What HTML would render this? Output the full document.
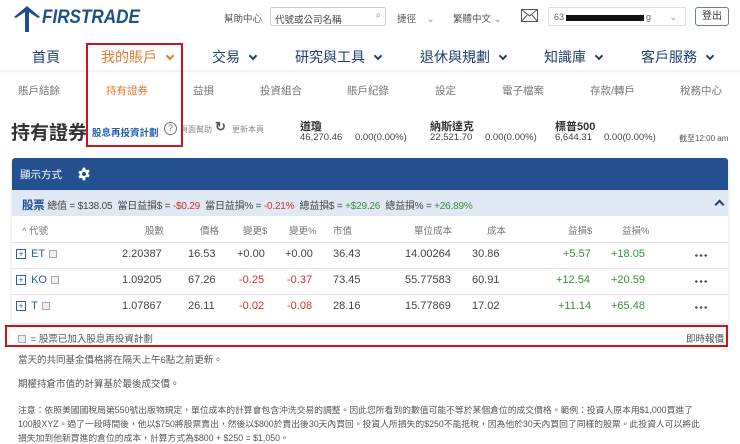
<!DOCTYPE html>
<html><head><meta charset="utf-8"><style>
*{margin:0;padding:0;box-sizing:border-box}
body{width:740px;height:442px;overflow:hidden;background:#fff;font-family:"Liberation Sans","Noto Sans CJK TC",sans-serif;color:#333;position:relative}
.a{position:absolute;white-space:nowrap}
.nav{font-size:14px;color:#1f3f6e;top:47px}
.sub{font-size:10.5px;color:#777;top:83px}
.th{font-size:9.5px;color:#777;top:223px}
.td{font-size:11px;color:#444}
.r{color:#d0312d}.g{color:#3a8d3a}
.chev{display:inline-block;width:6px;height:6px;border-right:2px solid #1f3f6e;border-bottom:2px solid #1f3f6e;transform:rotate(45deg);margin-left:10px;position:relative;top:-3px}
.plus{display:inline-block;width:10px;height:10px;border:1px solid #2f5f9f;font-size:9px;line-height:8px;text-align:center;color:#2f5f9f;vertical-align:middle}
.sq{display:inline-block;width:8px;height:8px;border:1px solid #aaa;background:#eee;vertical-align:middle;margin-left:4px}
.line{position:absolute;left:12px;width:716px;height:1px;background:#e2e2e2}
.txt{font-size:9.5px;color:#555}
.dots{position:absolute;left:694px;width:14px;height:3px;background:radial-gradient(circle,#555 1.2px,transparent 1.4px) 0 0/4.7px 3px repeat-x}
</style></head><body>
<svg class="a" style="left:12px;top:6px" width="30" height="26" viewBox="0 0 30 26"><path d="M15 0 L2 11 L4 12 L13 6 L13 26 L17 26 L17 6 L26 12 L28 11 Z" fill="#1f4e8c"/></svg>
<div class="a" style="left:42px;top:7px;font-size:19px;font-weight:bold;font-style:italic;color:#1f4e8c;transform:scaleX(0.9);transform-origin:left">FIRSTRADE</div>
<div class="a" style="left:224px;top:11px;font-size:9.5px;color:#555">幫助中心</div>
<div class="a" style="left:270px;top:7px;width:116px;height:19px;border:1px solid #ccc;border-radius:2px;font-size:9.5px;color:#444;padding:4px 4px">代號或公司名稱<span style="position:absolute;right:4px;top:2px;color:#888">⌕</span></div>
<div class="a" style="left:397px;top:11px;font-size:9.5px;color:#555">捷徑 <span style="color:#888;margin-left:8px">⌄</span></div>
<div class="a" style="left:453px;top:11px;font-size:9.5px;color:#555">繁體中文 <span style="color:#888">⌄</span></div>
<svg class="a" style="left:521px;top:9px" width="17" height="13"><rect x="0.5" y="0.5" width="16" height="12" fill="none" stroke="#555"/><path d="M0.5 0.5 L8.5 7 L16.5 0.5 M0.5 12.5 L6 6 M16.5 12.5 L11 6" fill="none" stroke="#555"/></svg>
<div class="a" style="left:548px;top:7px;width:138px;height:19px;border:1px solid #ddd;border-radius:2px;font-size:9px;color:#666;padding:4px 5px">63<span style="display:inline-block;width:78px;height:6px;background:#111;vertical-align:middle;margin:0 2px"></span>g<span style="position:absolute;right:8px;color:#888">⌄</span></div>
<div class="a" style="left:695px;top:7px;width:34px;height:19px;border:1px solid #6a7f9a;border-radius:3px;font-size:10px;color:#333;text-align:center;line-height:17px">登出</div>
<div class="a nav" style="left:32px">首頁</div>
<div class="a nav" style="left:101px;color:#e07a35">我的賬戶<span class="chev" style="border-color:#e07a35"></span></div>
<div class="a nav" style="left:212px">交易<span class="chev"></span></div>
<div class="a nav" style="left:295px">研究與工具<span class="chev"></span></div>
<div class="a nav" style="left:420px">退休與規劃<span class="chev"></span></div>
<div class="a nav" style="left:544px">知識庫<span class="chev"></span></div>
<div class="a nav" style="left:641px">客戶服務<span class="chev"></span></div>
<div class="a" style="left:0;top:70px;width:740px;height:3px;background:linear-gradient(#eee,#fff)"></div>
<div class="a sub" style="left:18px">賬戶結餘</div>
<div class="a sub" style="left:106px;color:#e07a35">持有證券</div>
<div class="a sub" style="left:193px">益損</div>
<div class="a sub" style="left:260px">投資組合</div>
<div class="a sub" style="left:347px">賬戶紀錄</div>
<div class="a sub" style="left:435px">設定</div>
<div class="a sub" style="left:502px">電子檔案</div>
<div class="a sub" style="left:590px">存款/轉戶</div>
<div class="a sub" style="left:680px">稅務中心</div>
<div class="a" style="left:11px;top:118px;font-size:19px;font-weight:bold;color:#333">持有證券</div>
<div class="a" style="left:92px;top:125px;font-size:9.5px;font-weight:bold;color:#2460b0">股息再投資計劃</div>
<div class="a" style="left:164px;top:122px;width:13px;height:13px;border:1px solid #777;border-radius:50%;font-size:9px;text-align:center;line-height:11px;color:#777">?</div>
<div class="a" style="left:180px;top:124px;font-size:8px;color:#888">頁面幫助</div>
<div class="a" style="left:215px;top:119px;font-size:13px;color:#555;font-weight:bold">↻</div>
<div class="a" style="left:232px;top:124px;font-size:8px;color:#888">更新本頁</div>
<div class="a" style="left:300px;top:118px;font-size:11px;font-weight:bold;color:#333">道瓊</div>
<div class="a" style="left:300px;top:132px;font-size:9.5px;color:#444">46,270.46</div>
<div class="a" style="left:355px;top:132px;font-size:9.5px;color:#444">0.00(0.00%)</div>
<div class="a" style="left:430px;top:118px;font-size:11px;font-weight:bold;color:#333">納斯達克</div>
<div class="a" style="left:430px;top:132px;font-size:9.5px;color:#444">22,521.70</div>
<div class="a" style="left:485px;top:132px;font-size:9.5px;color:#444">0.00(0.00%)</div>
<div class="a" style="left:555px;top:118px;font-size:11px;font-weight:bold;color:#333">標普500</div>
<div class="a" style="left:555px;top:132px;font-size:9.5px;color:#444">6,644.31</div>
<div class="a" style="left:604px;top:132px;font-size:9.5px;color:#444">0.00(0.00%)</div>
<div class="a" style="left:679px;top:133px;font-size:8px;color:#555">截至12:00 am</div>
<div class="a" style="left:12px;top:158px;width:716px;height:165px;box-shadow:0 1px 3px rgba(0,0,0,.15);border-radius:3px 3px 0 0"></div>
<div class="a" style="left:12px;top:158px;width:716px;height:32px;background:#23518f;border-radius:3px 3px 0 0"></div>
<div class="a" style="left:20px;top:167px;font-size:10.5px;color:#fff">顯示方式</div>
<svg class="a" style="left:77px;top:167px" width="14" height="14" viewBox="0 0 24 24"><path fill="#fff" fill-rule="evenodd" d="M10 1h4l.6 3a8 8 0 012.2 1.3l2.9-1 2 3.4-2.3 2a8 8 0 010 2.6l2.3 2-2 3.4-2.9-1a8 8 0 01-2.2 1.3L14 23h-4l-.6-3a8 8 0 01-2.2-1.3l-2.9 1-2-3.4 2.3-2a8 8 0 010-2.6l-2.3-2 2-3.4 2.9 1A8 8 0 019.4 4zM12 8.5a3.5 3.5 0 100 7 3.5 3.5 0 000-7z"/></svg>
<div class="a" style="left:12px;top:190px;width:716px;height:26px;background:#dfe8f3"></div>
<div class="a" style="left:22px;top:197px;font-size:10px;color:#444;letter-spacing:-0.2px"><b style="color:#1f4e8c;font-size:11.5px">股票</b> 總值 = $138.05 &nbsp;當日益損$ = <span class="r">-$0.29</span> &nbsp;當日益損% = <span class="r">-0.21%</span> &nbsp;總益損$ = <span class="g">+$29.26</span> &nbsp;總益損% = <span class="g">+26.89%</span></div>
<div class="a" style="left:716px;top:201px;width:7px;height:7px;border-left:2px solid #1f3f6e;border-top:2px solid #1f3f6e;transform:rotate(45deg)"></div>
<div class="a th" style="left:22px">^ 代號</div>
<div class="a th" style="left:145px">股數</div>
<div class="a th" style="left:200px">價格</div>
<div class="a th" style="left:243px">變更$</div>
<div class="a th" style="left:289px">變更%</div>
<div class="a th" style="left:333px">市值</div>
<div class="a th" style="left:414px">單位成本</div>
<div class="a th" style="left:487px">成本</div>
<div class="a th" style="left:568px">益損$</div>
<div class="a th" style="left:622px">益損%</div>
<div class="line" style="top:242px"></div>
<div class="line" style="top:268px"></div>
<div class="line" style="top:294px"></div>

<div class="a td" style="left:16px;top:248px"><span class="plus">+</span> <span style="color:#2f5f9f;margin-left:2px">ET</span><span class="sq"></span></div>
<div class="a td" style="left:122px;top:248px">2.20387</div><div class="a td" style="left:188px;top:248px">16.53</div><div class="a td" style="left:237px;top:248px">+0.00</div><div class="a td" style="left:285px;top:248px">+0.00</div><div class="a td" style="left:333px;top:248px">36.43</div><div class="a td" style="left:405px;top:248px">14.00264</div><div class="a td" style="left:472px;top:248px">30.86</div><div class="a td g" style="left:563px;top:248px">+5.57</div><div class="a td g" style="left:611px;top:248px">+18.05</div><div class="dots" style="top:254px"></div>

<div class="a td" style="left:16px;top:274px"><span class="plus">+</span> <span style="color:#2f5f9f;margin-left:2px">KO</span><span class="sq"></span></div>
<div class="a td" style="left:122px;top:274px">1.09205</div><div class="a td" style="left:188px;top:274px">67.26</div><div class="a td r" style="left:239px;top:274px">-0.25</div><div class="a td r" style="left:287px;top:274px">-0.37</div><div class="a td" style="left:333px;top:274px">73.45</div><div class="a td" style="left:405px;top:274px">55.77583</div><div class="a td" style="left:472px;top:274px">60.91</div><div class="a td g" style="left:556px;top:274px">+12.54</div><div class="a td g" style="left:611px;top:274px">+20.59</div><div class="dots" style="top:280px"></div>

<div class="a td" style="left:16px;top:300px"><span class="plus">+</span> <span style="color:#2f5f9f;margin-left:2px">T</span><span class="sq"></span></div>
<div class="a td" style="left:122px;top:300px">1.07867</div><div class="a td" style="left:188px;top:300px">26.11</div><div class="a td r" style="left:239px;top:300px">-0.02</div><div class="a td r" style="left:287px;top:300px">-0.08</div><div class="a td" style="left:333px;top:300px">28.16</div><div class="a td" style="left:405px;top:300px">15.77869</div><div class="a td" style="left:472px;top:300px">17.02</div><div class="a td g" style="left:558px;top:300px">+11.14</div><div class="a td g" style="left:611px;top:300px">+65.48</div><div class="dots" style="top:306px"></div>

<div class="a" style="left:5px;top:325px;width:723px;height:22px;border:2px solid #c8161d"></div>
<div class="a txt" style="left:18px;top:331px"><span class="sq" style="margin:0 2px 0 0"></span> = 股票已加入股息再投資計劃</div>
<div class="a txt" style="left:686px;top:331px">即時報價</div>
<div class="a" style="left:86px;top:43px;width:97px;height:104px;border:2px solid #c8161d"></div>
<div class="a txt" style="left:18px;top:352px">當天的共同基金價格將在隔天上午6點之前更新。</div>
<div class="a txt" style="left:18px;top:376px">期權持倉市值的計算基於最後成交價。</div>
<div class="a txt" style="left:18px;top:403px;font-size:8.8px">注意：依照美國國稅局第550號出版物規定，單位成本的計算會包含沖洗交易的調整。因此您所看到的數值可能不等於某個倉位的成交價格。範例：投資人原本用$1,000買進了</div>
<div class="a txt" style="left:18px;top:417px;font-size:8.8px">100股XYZ。過了一段時間後，他以$750將股票賣出，然後以$800於賣出後30天內買回。投資人所損失的$250不能抵稅，因為他於30天內買回了同樣的股票。此投資人可以將此</div>
<div class="a txt" style="left:18px;top:431px;font-size:8.8px">損失加到他新買進的倉位的成本，計算方式為$800 + $250 = $1,050。</div>
</body></html>
